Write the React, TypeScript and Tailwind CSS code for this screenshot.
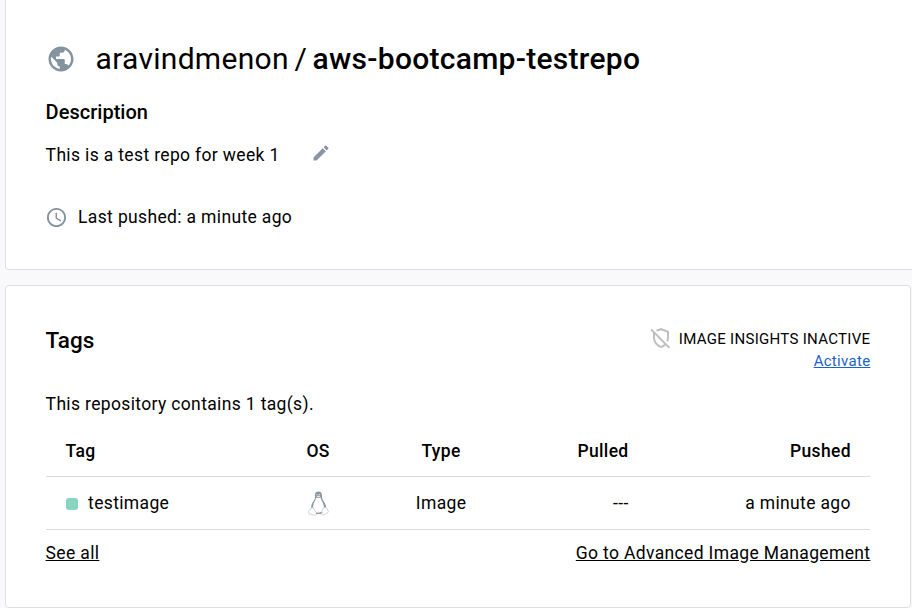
import { MdEdit, MdOutlineRemoveModerator, MdPublic, MdSchedule } from "react-icons/md";

function Penguin() {
  return (
    <svg width="21" height="25" viewBox="0 0 20 25" preserveAspectRatio="none" fill="none">
      <path d="M10 .6C7.400.6 6.500 2.500 6.600 4.700c.1 2.400.1 3.300-1.300 5.400C3.900 12.200 3 14 2.900 17.500L8 22.500h4.500l4.800-5.500c.1-3-1.600-5.600-2.900-7.500-1.100-1.700-1-3.200-1.100-5C13.100 2.200 12.400.6 10 .6Z" fill="#8797a1" />
      <path d="M7.800 6.600c1.200.9 2.900.9 4.100 0 .5 2.900 3.200 5.700 3.300 9.500.1 3.500-2.200 5.700-5.200 5.700S4.700 19 4.800 15.800c.1-3.700 2.600-6.300 3-9.200Z" fill="#fff" />
      <path d="M7.900 5.500 10 4.500l2.100.9L10 6.800Z" fill="#dfe4e7" />
      <circle cx="8.600" cy="3.700" r=".6" fill="#dfe4e7" />
      <circle cx="11" cy="3.700" r=".6" fill="#dfe4e7" />
      <path d="M3.600 16.400c1.400.2 2.700 2.800 4 4.700 1.200 1.900.4 3.300-1.600 3.100-1.700-.2-2.600-.8-4.900-1.300-.9-.3-.5-1.700-.4-2.700 0-1.600 2.200-.9 2.900-3.800Zm12.700.1c-.9 0-1.300.8-2.100.7-.9 1.600-1.100 4.500-.9 6 .5 1.400 2.100 1.100 3.100 0 1-.9 2.100-1.300 2.900-2 .8-.8-.5-1.500-.7-2.600-.3-1.600-.9-2-2.300-2.100Z" fill="#fff" stroke="#c3cacf" strokeWidth=".8" />
      <path d="M7.800 22.200c1.500.6 3.400.5 5-.4" stroke="#8797a1" strokeWidth="1" />
    </svg>
  );
}

export default function App() {
  return (
    <div className="flex h-[608px] w-[912px] flex-col gap-[15px] overflow-hidden bg-[#f9f9fb] pl-[5px] font-[Roboto,sans-serif] text-[17.5px] tracking-[0.35px] text-black">
      <section className="h-[270px] shrink-0 rounded-bl-[4px] border-b border-l border-[#dddfe2] bg-white pl-[39.6px] pt-[39px]">
        <h1 className="flex h-10 items-center text-[30px] leading-10 tracking-[0.28px]">
          <MdPublic className="mr-5 size-[30px] text-[#8393a0]" />
          <span className="w-[199px]">aravindmenon</span>
          <span className="w-[18px]">/</span>
          <span className="font-medium">aws-bootcamp-testrepo</span>
        </h1>
        <h2 className="mt-[19px] text-[20px] font-medium leading-7 tracking-[0.02px]">Description</h2>
        <div className="mt-[15px] flex h-7 items-center">
          <p className="w-[265px] leading-7">This is a test repo for week 1</p>
          <MdEdit className="-mt-1 size-5 text-[#8993a5]" />
        </div>
        <div className="mt-[34px] flex h-7 items-center">
          <MdSchedule className="-ml-[0.5px] mr-[10px] size-[23px] text-[#8393a0]" />
          <p>Last pushed: a minute ago</p>
        </div>
      </section>

      <section className="h-[323px] w-[906px] shrink-0 rounded-[4px] border border-[#dddfe2] bg-white pl-[39.6px] pr-[39.6px] pt-[38px]">
        <div className="flex h-[66px] justify-between">
          <h2 className="text-[22.5px] font-medium leading-8 tracking-[0px]">Tags</h2>
          <div className="flex flex-col items-end pt-[3px] text-[15px] leading-[22px] tracking-[0.3px]">
            <div className="flex h-[23px] items-start">
              <MdOutlineRemoveModerator className="-mt-px mr-[6px] size-[24px] text-[#bfbfbf]" />
              <span className="pt-px">IMAGE INSIGHTS INACTIVE</span>
            </div>
            <a className="text-[#1d63c5] underline">Activate</a>
          </div>
        </div>
        <p className="leading-7">This repository contains 1 tag(s).</p>
        <table className="mt-[5px] w-[824.800px] table-fixed border-collapse">
          <thead>
            <tr className="h-[53px] border-b border-[#dcdcdc]">
              <th className="w-[225px] pl-5 pt-[3px] text-left font-medium">Tag</th>
              <th className="w-[95px] pt-[3px] font-medium">OS</th>
              <th className="w-[151px] pt-[3px] font-medium">Type</th>
              <th className="w-[112px] pt-[3px] text-right font-medium">Pulled</th>
              <th className="pr-[19.5px] pt-[3px] text-right font-medium">Pushed</th>
            </tr>
          </thead>
          <tbody>
            <tr className="h-[53px] border-b border-[#dcdcdc]">
              <td className="pl-5 pt-[2px]">
                <span className="flex items-center gap-[10.5px]">
                  <span className="size-3 rounded-[3px] bg-[#86d5bd]" />
                  testimage
                </span>
              </td>
              <td className="pt-px"><span className="flex justify-center"><Penguin /></span></td>
              <td className="pt-px text-center">Image</td>
              <td className="pt-px text-right">---</td>
              <td className="pr-[19.5px] pt-px text-right">a minute ago</td>
            </tr>
          </tbody>
        </table>
        <div className="flex justify-between pt-[9px] leading-7">
          <a className="underline">See all</a>
          <a className="underline">Go to Advanced Image Management</a>
        </div>
      </section>
    </div>
  );
}
